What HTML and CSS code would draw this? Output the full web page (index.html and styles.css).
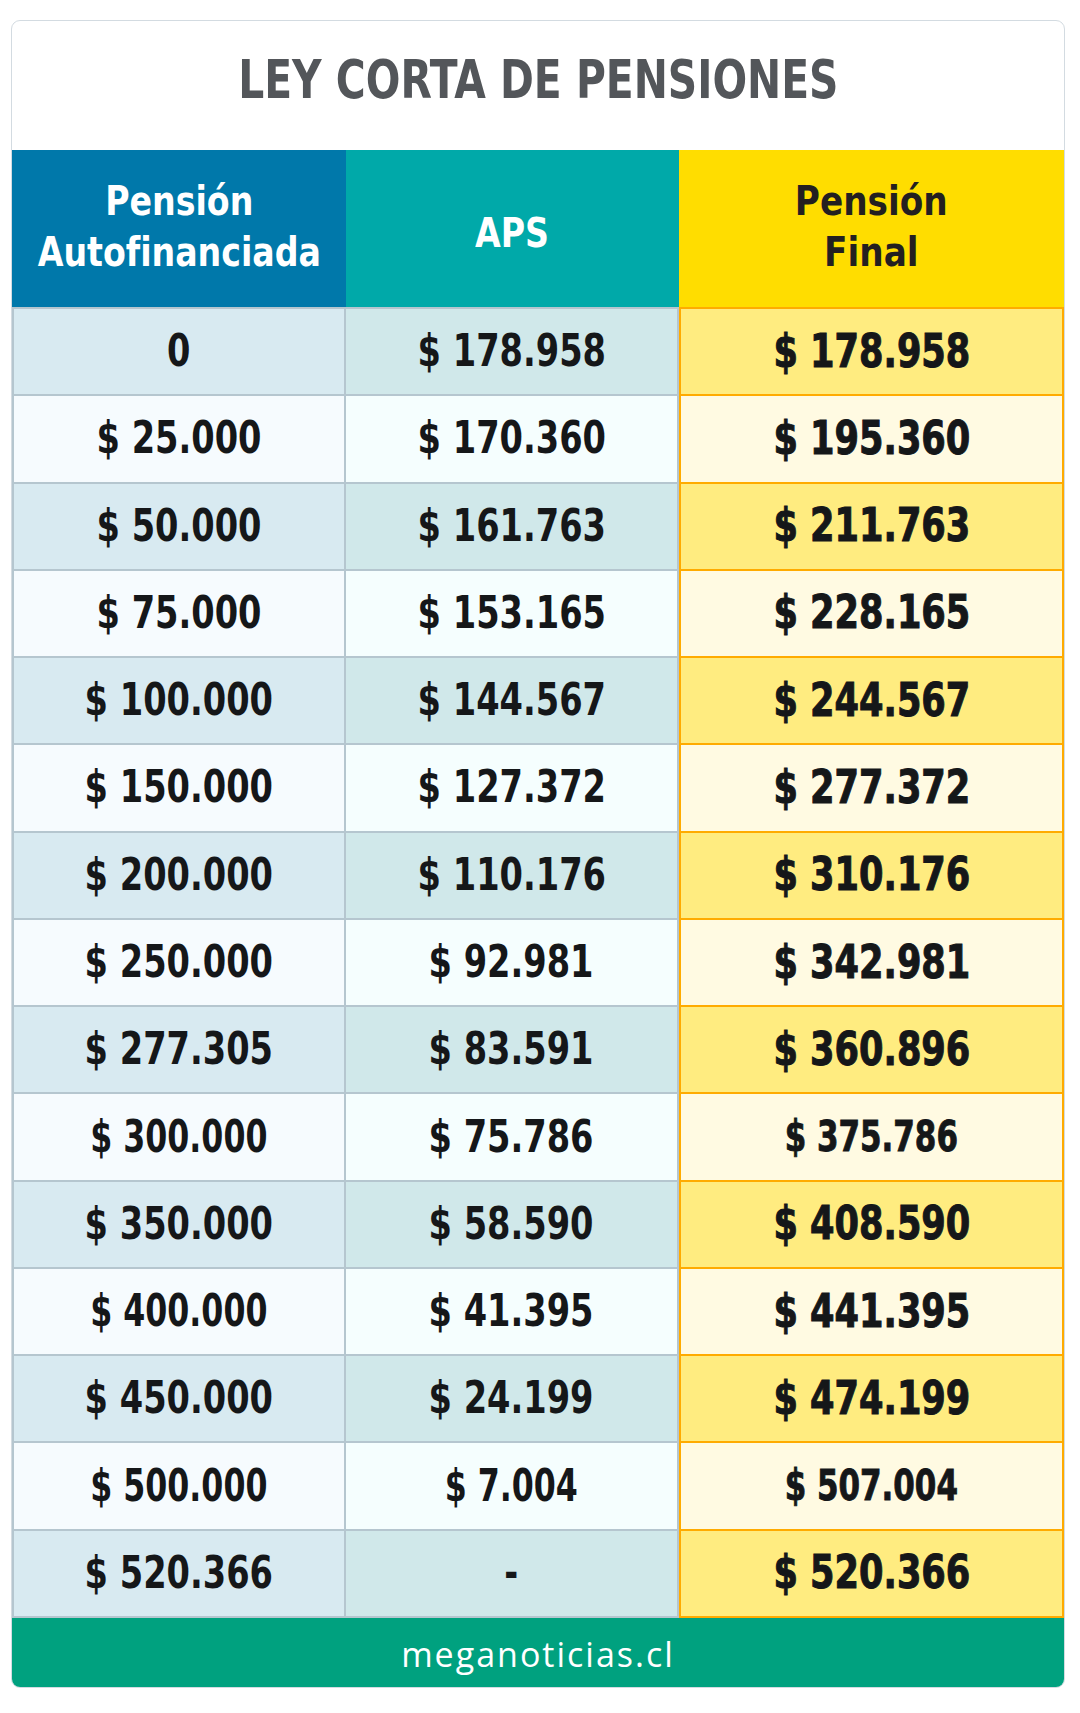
FILE: index.html
```html
<!DOCTYPE html>
<html lang="es">
<head>
<meta charset="utf-8">
<title>Ley corta de pensiones</title>
<link rel="stylesheet" href="styles.css">
</head>
<body>
<div class="card">
  <h1 class="title"><span class="t">LEY CORTA DE PENSIONES</span></h1>
  <div class="table">
    <div class="th th-auto"><span class="t">Pensión<br>Autofinanciada</span></div>
    <div class="th th-aps"><span class="t">APS</span></div>
    <div class="th th-final"><span class="t">Pensión<br>Final</span></div>

    <div class="td c1 odd first"><span class="t">0</span></div>
    <div class="td c2 odd first"><span class="t">$ 178.958</span></div>
    <div class="td c3 odd first"><span class="t">$ 178.958</span></div>

    <div class="td c1 even"><span class="t">$ 25.000</span></div>
    <div class="td c2 even"><span class="t">$ 170.360</span></div>
    <div class="td c3 even"><span class="t">$ 195.360</span></div>

    <div class="td c1 odd"><span class="t">$ 50.000</span></div>
    <div class="td c2 odd"><span class="t">$ 161.763</span></div>
    <div class="td c3 odd"><span class="t">$ 211.763</span></div>

    <div class="td c1 even"><span class="t">$ 75.000</span></div>
    <div class="td c2 even"><span class="t">$ 153.165</span></div>
    <div class="td c3 even"><span class="t">$ 228.165</span></div>

    <div class="td c1 odd"><span class="t">$ 100.000</span></div>
    <div class="td c2 odd"><span class="t">$ 144.567</span></div>
    <div class="td c3 odd"><span class="t">$ 244.567</span></div>

    <div class="td c1 even"><span class="t">$ 150.000</span></div>
    <div class="td c2 even"><span class="t">$ 127.372</span></div>
    <div class="td c3 even"><span class="t">$ 277.372</span></div>

    <div class="td c1 odd"><span class="t">$ 200.000</span></div>
    <div class="td c2 odd"><span class="t">$ 110.176</span></div>
    <div class="td c3 odd"><span class="t">$ 310.176</span></div>

    <div class="td c1 even"><span class="t">$ 250.000</span></div>
    <div class="td c2 even"><span class="t">$ 92.981</span></div>
    <div class="td c3 even"><span class="t">$ 342.981</span></div>

    <div class="td c1 odd"><span class="t">$ 277.305</span></div>
    <div class="td c2 odd"><span class="t">$ 83.591</span></div>
    <div class="td c3 odd"><span class="t">$ 360.896</span></div>

    <div class="td c1 even tight"><span class="t">$ 300.000</span></div>
    <div class="td c2 even"><span class="t">$ 75.786</span></div>
    <div class="td c3 even tight"><span class="t">$ 375.786</span></div>

    <div class="td c1 odd"><span class="t">$ 350.000</span></div>
    <div class="td c2 odd"><span class="t">$ 58.590</span></div>
    <div class="td c3 odd"><span class="t">$ 408.590</span></div>

    <div class="td c1 even tight"><span class="t">$ 400.000</span></div>
    <div class="td c2 even"><span class="t">$ 41.395</span></div>
    <div class="td c3 even"><span class="t">$ 441.395</span></div>

    <div class="td c1 odd"><span class="t">$ 450.000</span></div>
    <div class="td c2 odd"><span class="t">$ 24.199</span></div>
    <div class="td c3 odd"><span class="t">$ 474.199</span></div>

    <div class="td c1 even tight"><span class="t">$ 500.000</span></div>
    <div class="td c2 even tight"><span class="t">$ 7.004</span></div>
    <div class="td c3 even tight"><span class="t">$ 507.004</span></div>

    <div class="td c1 odd"><span class="t">$ 520.366</span></div>
    <div class="td c2 odd"><span class="t">-</span></div>
    <div class="td c3 odd"><span class="t">$ 520.366</span></div>
  </div>
  <div class="footer">meganoticias.cl</div>
</div>
</body>
</html>
```
FILE: styles.css
```css
html, body {
  margin: 0;
  padding: 0;
  background: #ffffff;
}

body {
  font-family: "DejaVu Sans Condensed", "DejaVu Sans", sans-serif;
}

.t {
  display: inline-block;
  white-space: nowrap;
  transform-origin: 50% 50%;
}

.card {
  box-sizing: border-box;
  width: 1054px;
  margin: 20px 0 0 11px;
  border: 1px solid #d3dbe1;
  border-radius: 9px;
  overflow: hidden;
  background: #ffffff;
}

.title {
  box-sizing: border-box;
  height: 129px;
  margin: 0;
  padding-bottom: 12px;
  display: flex;
  align-items: center;
  justify-content: center;
  font-size: 54px;
  font-weight: 700;
  color: #53565a;
}

.title .t {
  transform: scaleX(0.84);
}

.table {
  display: grid;
  grid-template-columns: 334px 333px 385px;
  grid-template-rows: 157px 89.3px repeat(14, 87.27px);
}

.th {
  display: flex;
  align-items: center;
  justify-content: center;
  text-align: center;
  font-size: 41px;
  font-weight: 700;
  line-height: 51px;
  padding-bottom: 4px;
  box-sizing: border-box;
}

.th .t {
  transform: scaleX(0.9);
}

.th-auto {
  background: #0078aa;
  color: #ffffff;
}

.th-aps {
  background: #00a9a9;
  color: #ffffff;
  padding-top: 9px;
  padding-bottom: 0;
}

.th-final {
  background: #ffdd00;
  color: #231f20;
}

.th-final .t {
  transform: scaleX(0.93);
}

.td {
  box-sizing: border-box;
  display: flex;
  align-items: center;
  justify-content: center;
  font-size: 44px;
  font-weight: 700;
  color: #151719;
  padding-bottom: 2px;
  border-bottom: 2px solid #b5c6cf;
}

.td .t {
  transform: scaleX(0.85);
}

.td.first {
  border-top: 2px solid #b5c6cf;
}

.c1 {
  border-left: 2px solid #b5c6cf;
  border-right: 2px solid #b5c6cf;
}

.c2 {
  border-right: 2px solid #b5c6cf;
}

.c1.odd { background: #d8eaf1; }
.c1.even { background: #f6fbfe; }
.c2.odd { background: #d0e8ea; }
.c2.even { background: #f5fefe; }

.c3 {
  font-size: 46px;
  -webkit-text-stroke: 1px #151719;
  border-left: 2px solid #ffab00;
  border-right: 2px solid #ffab00;
  border-bottom-color: #ffab00;
}

.td.c3 .t {
  transform: scaleX(0.85);
}

.td.c3.first {
  border-top-color: #ffab00;
}

.c3.odd { background: #ffec80; }
.c3.even { background: #fffae2; }

.td.tight .t {
  transform: scaleX(0.8);
}

.td.c3.tight {
  font-size: 43px;
  -webkit-text-stroke: 0.9px #151719;
}

.td.c3.tight .t {
  transform: scaleX(0.8);
}

.footer {
  height: 69px;
  display: flex;
  align-items: center;
  justify-content: center;
  background: #00a17f;
  color: #ffffff;
  font-family: "Open Sans", "Noto Sans", sans-serif;
  font-size: 34px;
  font-weight: 400;
  letter-spacing: 2px;
  padding-top: 2px;
  box-sizing: border-box;
}
```
